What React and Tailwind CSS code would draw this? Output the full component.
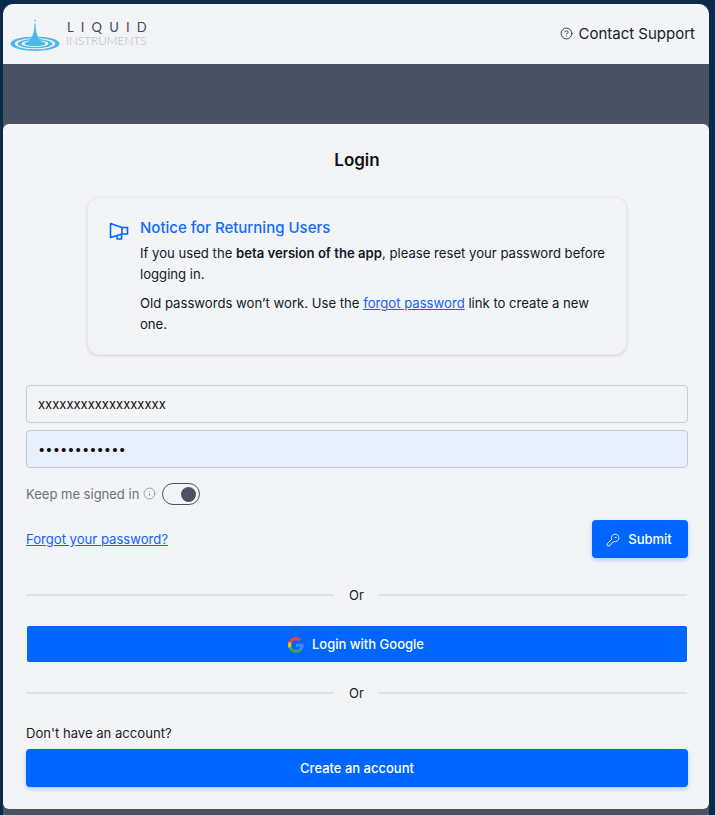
import React from 'react';
import { CircleHelp, Info, KeyRound } from 'lucide-react';

const Logo = () => (
  <svg width="50" height="34" viewBox="0 0 52 34" className="shrink-0">
    <ellipse cx="26" cy="25" rx="25.500" ry="7.500" fill="#4db8e8" />
    <ellipse cx="26" cy="25" rx="21" ry="5.800" fill="#f3f4f6" />
    <ellipse cx="26" cy="25" rx="18" ry="4.800" fill="#4db8e8" />
    <ellipse cx="26" cy="25" rx="14" ry="3.500" fill="#f3f4f6" />
    <ellipse cx="26" cy="25" rx="11" ry="2.700" fill="#4db8e8" />
    <path d="M25.400 4 L26.600 4 C26.800 13 28 18 33 23 C30 25 22 25 19 23 C24 18 25.200 13 25.400 4 Z" fill="#4db8e8" />
    <circle cx="26" cy="1" r="0.900" fill="#4db8e8" />
  </svg>
);

const NoticeIcon = () => (
  <svg width="20" height="18" viewBox="0 0 20 18" fill="none" stroke="#0066ff" strokeWidth="1.600" strokeLinejoin="round" className="mt-[4px] shrink-0">
    <path d="M1.500 1.500 L13 5.500 H18.500 V12 H13 L1.500 15.500 Z" />
    <path d="M13 5.500 V12" />
    <path d="M8 14 V17 H12.500 V12.500" />
  </svg>
);

const GoogleIcon = () => (
  <svg width="16" height="16" viewBox="0 0 48 48" className="shrink-0">
    <path fill="#EA4335" d="M24 9.500c3.500 0 6.700 1.200 9.200 3.600l6.900-6.900C35.900 2.400 30.500 0 24 0 14.600 0 6.500 5.400 2.600 13.200l8 6.200C12.500 13.600 17.800 9.500 24 9.500z" />
    <path fill="#4285F4" d="M47 24.500c0-1.600-.1-3.100-.4-4.500H24v9h13c-.6 3-2.300 5.500-4.800 7.200l7.700 6C44.400 38 47 31.900 47 24.500z" />
    <path fill="#FBBC05" d="M10.500 28.600c-.5-1.400-.8-3-.8-4.600s.3-3.200.8-4.600l-8-6.200C.9 16.500 0 20.100 0 24s.9 7.500 2.600 10.800l7.900-6.200z" />
    <path fill="#34A853" d="M24 48c6.500 0 11.900-2.100 15.900-5.800l-7.700-6c-2.100 1.400-4.900 2.300-8.200 2.300-6.200 0-11.500-4.100-13.400-9.900l-8 6.200C6.500 42.600 14.600 48 24 48z" />
  </svg>
);

const Divider = () => (
  <div className="mr-[1px] flex items-center">
    <div className="h-0.5 flex-1 bg-[#dfe1e5]" />
    <span className="px-[15px] text-[13px] leading-5 text-[#222]">Or</span>
    <div className="h-0.5 flex-1 bg-[#dfe1e5]" />
  </div>
);

export default function App() {
  return (
    <div
      className="flex h-[815px] flex-col overflow-hidden bg-[#0b2b4c] pl-[3px] pr-[6px] pt-[4px] text-[13px] text-[#111827]"
      style={{ fontFamily: 'Inter, sans-serif' }}
    >
      <div className="flex flex-1 flex-col overflow-hidden rounded-t-[10px] bg-[#4b5263]">
        <header className="flex h-[60px] shrink-0 items-start justify-between bg-[#f3f4f6] pl-[7px] pr-[14px]">
          <div className="mt-[15px] flex items-start gap-[6px]">
            <Logo />
            <div className="mt-[1px] flex flex-col" style={{ fontFamily: 'Lato, sans-serif' }}>
              <span className="pl-[1px] text-[13px] leading-[14px] tracking-[0.55em] text-[#3f4a5e]">LIQUID</span>
              <span className="text-[12px] leading-[14px] font-light tracking-[-0.01em] text-[#b4b8be]">INSTRUMENTS</span>
            </div>
          </div>
          <a className="mt-[20px] flex items-center gap-[5px] text-[15px] leading-5 text-[#161c2c]">
            <CircleHelp size={13} strokeWidth={1.5} className="-mt-[2px]" />
            Contact Support
          </a>
        </header>

        <div className="h-[60px] shrink-0" />

        <main className="flex h-[685px] shrink-0 flex-col rounded-[6px] bg-[#f3f4f6] pl-[23px] pr-[21px]">
          <h1 className="mt-[26px] text-center text-[17px] leading-5 font-semibold text-[#111]">Login</h1>

          <section className="mx-auto mt-[27px] flex h-[158px] w-[540px] gap-[11px] rounded-xl border border-[#e8e9ec] bg-[#f3f4f6] pl-[21px] pr-4 pt-[20px] shadow-[0_1px_3px_rgba(0,0,0,0.12)]">
            <NoticeIcon />
            <div className="text-[13.14px]">
              <h2 className="text-[15px] leading-5 font-medium text-[#0f6bff]">Notice for Returning Users</h2>
              <p className="mt-[5px] leading-[21px]">
                If you used the <b className="font-semibold">beta version of the app</b>, please reset your password before logging in.
              </p>
              <p className="mt-2 leading-[21px]">
                Old passwords won’t work. Use the <a className="text-[#0f62fe] underline">forgot password</a> link to create a new one.
              </p>
            </div>
          </section>

          <input
            readOnly
            value="xxxxxxxxxxxxxxxxxx"
            className="mt-[30px] h-[38px] w-full rounded border border-[#c9ccd1] bg-[#f3f4f6] px-[11px] text-[13px] text-[#111]"
          />
          <input
            readOnly
            type="password"
            value="xxxxxxxxxxxx"
            className="mt-[7px] h-[38px] w-full rounded border border-[#c3c8d0] bg-[#e8f0fe] px-[11px] text-[13px] text-[#111]"
          />

          <div className="mt-[15px] flex items-center text-[13px] leading-5 text-[#6b7280]">
            <span>Keep me signed in</span>
            <Info size={13} strokeWidth={1.5} className="ml-[4px] -mt-[2px] text-[#8b8f98]" />
            <div className="ml-[6px] flex h-[22px] w-[38px] items-center justify-end rounded-full border border-[#4b5263] pr-[3px]">
              <div className="size-[15px] rounded-full bg-[#4b5263]" />
            </div>
          </div>

          <div className="mt-[15px] flex h-[38px] items-center justify-between">
            <a className="pt-[2px] text-[13.1px] text-[#0f62fe] underline">Forgot your password?</a>
            <button className="flex h-[38px] w-[96px] items-center justify-center gap-2 rounded bg-[#0066ff] pr-[2px] pt-[1px] text-[13px] font-medium text-white shadow-[0_2px_4px_rgba(0,102,255,0.3)]">
              <KeyRound size={14} strokeWidth={1.5} />
              Submit
            </button>
          </div>

          <div className="mt-[27px]">
            <Divider />
          </div>

          <button className="mx-[1px] mt-[21px] flex h-9 items-center justify-center gap-2 rounded-[2px] bg-[#0066ff] pr-[2px] pt-[1px] text-[13px] font-medium text-white">
            <GoogleIcon />
            Login with Google
          </button>

          <div className="mt-[21px]">
            <Divider />
          </div>

          <p className="mt-[20px] text-[13.1px] leading-5 text-[#222]">Don't have an account?</p>
          <button className="mt-[6px] h-[38px] rounded bg-[#0066ff] pt-[1px] text-[13px] font-medium text-white shadow-[0_2px_4px_rgba(0,102,255,0.3)]">
            Create an account
          </button>
        </main>
      </div>
    </div>
  );
}
